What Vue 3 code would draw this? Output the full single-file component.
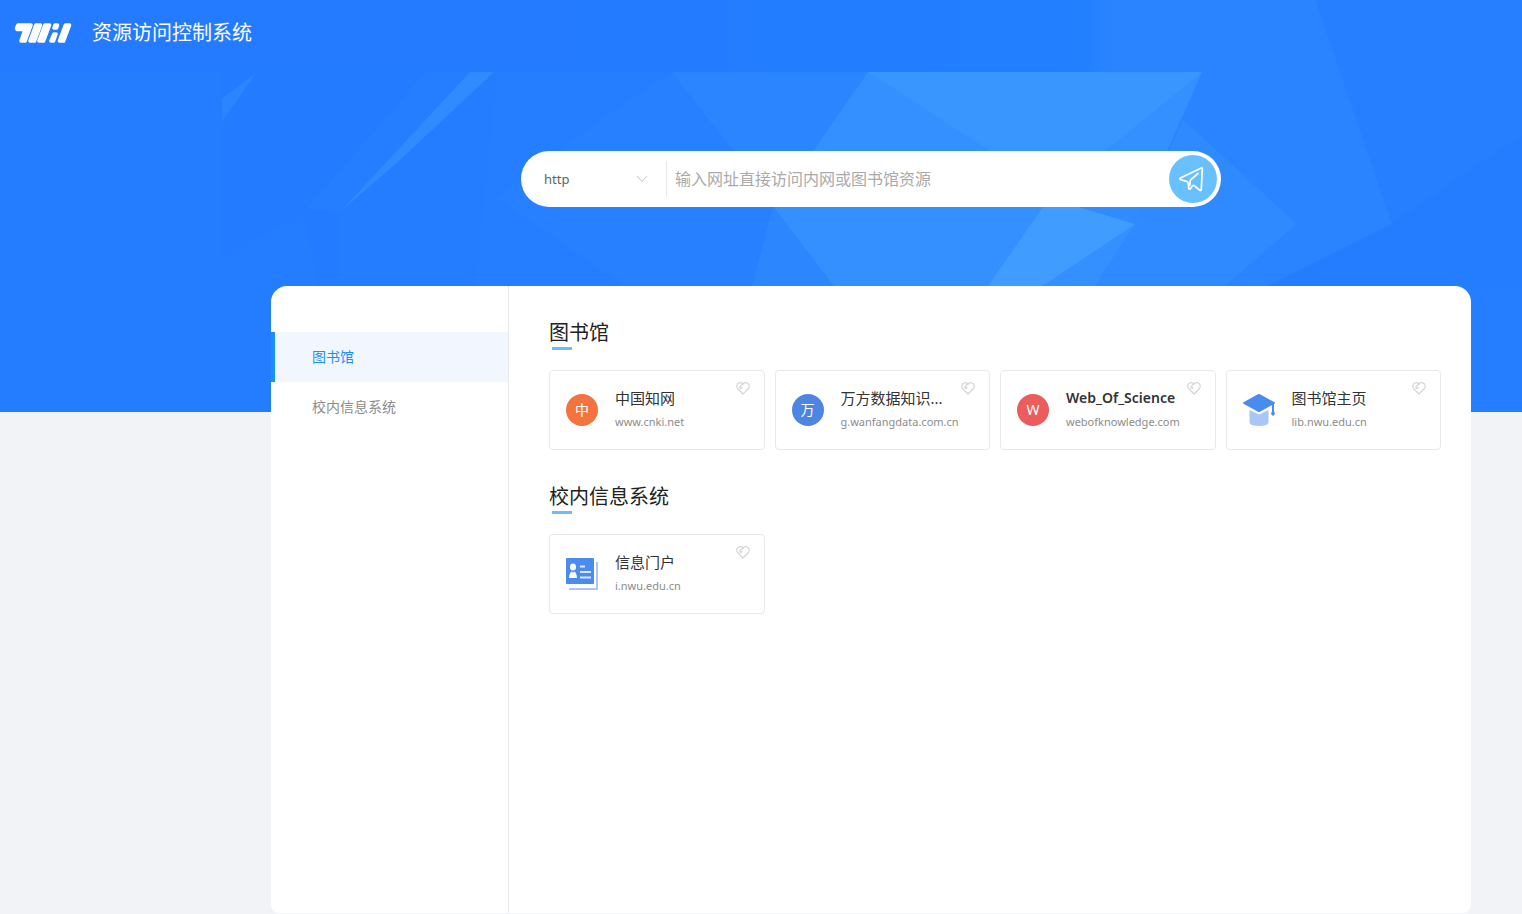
<script setup>
import { ref } from 'vue'

const protocol = ref('http')
const address = ref('')
const activeMenu = ref('library')

const sections = [
  {
    id: 'library',
    title: '图书馆',
    items: [
      { name: '中国知网', host: 'www.cnki.net', mark: '中', tone: 'orange' },
      { name: '万方数据知识...', host: 'g.wanfangdata.com.cn', mark: '万', tone: 'blue' },
      { name: 'Web_Of_Science', host: 'webofknowledge.com', mark: 'W', tone: 'red', latin: true },
      { name: '图书馆主页', host: 'lib.nwu.edu.cn', icon: 'cap' },
    ],
  },
  {
    id: 'campus',
    title: '校内信息系统',
    items: [{ name: '信息门户', host: 'i.nwu.edu.cn', icon: 'portal' }],
  },
]
</script>

<template>
  <div class="page">
    <div class="backdrop">
      <svg viewBox="0 0 1522 412" preserveAspectRatio="xMidYMin slice" aria-hidden="true">
        <defs>
          <linearGradient id="band" x1="0" x2="1" y1="0" y2="0">
            <stop offset="0.5" stop-color="#247bff" />
            <stop offset="1" stop-color="#2280ff" />
          </linearGradient>
          <linearGradient id="facet" gradientUnits="userSpaceOnUse" x1="1085" x2="1110" y1="0" y2="0">
            <stop offset="0" stop-color="#2280ff" />
            <stop offset="1" stop-color="#2a84ff" />
          </linearGradient>
        </defs>
        <polygon points="497,72 1522,72 1522,412 480,412 475,286" fill="#257eff" />
        <polygon points="222,98 257,72 222,122" fill="#2a85ff" />
        <polygon points="425,72 470,72 340,212 305,210" fill="#257eff" />
        <polygon points="222,72 257,72 222,98" fill="#237bff" />
        <polygon points="222,122 257,72 425,72 305,210 222,257" fill="#237bff" />
        <polygon points="305,210 338,214 338,286 318,286" fill="#237bff" />
        <polygon points="470,72 494,72 400,160 340,212" fill="#308bff" />
        <polygon points="498,198 600,120 672,72 900,72 900,286 625,286" fill="#2780ff" />
        <polygon points="672,72 868,72 790,185 760,185" fill="#2b85ff" />
        <polygon points="773,207 834,286 752,286" fill="#2c87ff" />
        <polygon points="1085,0 1316,0 1392,224 1268,286 1095,286 1183,72 1085,72" fill="url(#facet)" />
        <polygon points="1316,0 1522,0 1522,135 1392,224" fill="#267fff" />
        <polygon points="1392,224 1522,135 1522,286 1268,286" fill="#247dff" />
        <polygon points="1183,120 1297,224 1225,286 1095,286 1135,224" fill="#2f8aff" />
        <polygon points="868,72 1202,72 1135,224 1095,286 834,286 765,196 813,151" fill="#3590ff" />
        <polygon points="868,72 1202,72 1105,151 990,151" fill="#3995ff" />
        <polygon points="1078,207 1142,207 1135,224" fill="#308bff" />
        <polygon points="1043,207 1078,207 1135,224 1042,286 988,286" fill="#409cff" />
        <rect x="0" y="0" width="1086" height="72" fill="url(#band)" />
      </svg>
    </div>

    <header class="topbar">
      <svg class="logo" width="58" height="22" viewBox="0 0 58 22" aria-hidden="true">
        <g fill="#fff" stroke="#fff" stroke-width="3.600" stroke-linejoin="round">
          <path d="M4 3H17L11 19H7L11 7.500H3L2.500 6Z" />
          <path d="M22 3H26.500L20.500 19H16Z" />
          <path d="M31 3H35.500L29.500 19H25Z" />
          <path d="M41 3H43.500L42.500 6H40Z" />
          <path d="M40 12H42L39.500 19H37Z" />
          <path d="M51.500 3H55.500L49.500 19H45.500Z" />
        </g>
      </svg>
      <h1>资源访问控制系统</h1>
    </header>

    <main class="content">
      <form class="search" @submit.prevent>
        <div class="protocol">
          <select v-model="protocol" aria-label="协议">
            <option>http</option>
            <option>https</option>
          </select>
          <svg width="12" height="8" viewBox="0 0 12 8" aria-hidden="true">
            <path d="M1 1L6 6.500L11 1" fill="none" stroke="#c0c4cc" />
          </svg>
        </div>
        <input v-model="address" type="text" aria-label="网址" placeholder="输入网址直接访问内网或图书馆资源" />
        <button type="submit" aria-label="访问">
          <svg width="28" height="28" viewBox="0 0 28 28" aria-hidden="true">
            <path
              d="M24.300 3L3.500 13Q2.300 14 3.500 14.600L10 16.500Q11 17 11.200 18.500L11.800 23.500Q12.500 25 13.500 23.500L15.500 20.800Q16.300 20 17.300 20.700L22.800 25.300Q24.200 25.800 24.300 24.500L25.300 4Q25.300 2.800 24.300 3ZM21 8.500L14 14.500Q13 15.500 13 17V20"
              fill="none" stroke="#fff" stroke-width="1.700" stroke-linecap="round" stroke-linejoin="round"
            />
          </svg>
        </button>
      </form>

      <div class="panel">
        <nav class="menu">
          <a
            v-for="section in sections"
            :key="section.id"
            :href="'#' + section.id"
            :class="{ active: activeMenu === section.id }"
            @click="activeMenu = section.id"
          >{{ section.title }}</a>
        </nav>

        <div class="groups">
          <section v-for="section in sections" :id="section.id" :key="section.id">
            <h2>{{ section.title }}</h2>
            <div class="cards">
              <article v-for="item in section.items" :key="item.name" class="card">
                <span v-if="item.mark" class="badge" :class="item.tone">{{ item.mark }}</span>
                <svg v-else-if="item.icon === 'cap'" class="glyph" viewBox="0 0 32 32" aria-hidden="true">
                  <path d="M6.500 16L16 20.500L25.500 16V28.500Q25 32 16 32T6.500 28.500Z" fill="#a9c6f7" />
                  <path d="M15 0.300Q16 -0.200 17 0.300L31.500 8.300Q32.500 9 31.500 9.700L17 17.700Q16 18.200 15 17.700L0.500 9.700Q-0.500 9 0.500 8.300Z" fill="#4a8bee" />
                  <path d="M29 9H31V17L32 20L30 22L28 20L29 17Z" fill="#4a8bee" />
                </svg>
                <svg v-else class="glyph" viewBox="0 0 32 32" aria-hidden="true">
                  <path d="M30 4H32V32H3V30H30Z" fill="#a9c6f7" />
                  <rect width="28" height="26" rx="1" fill="#4a8bee" />
                  <ellipse cx="7" cy="9" rx="3" ry="3.500" fill="#fff" />
                  <path d="M3 20Q3.500 14 6 13.500L7 15L8 13.500Q10.500 14 11 20Z" fill="#fff" />
                  <path d="M14 8.500H19M14 14H25M14 19.500H25" fill="none" stroke="#dbe8fc" stroke-width="2" />
                </svg>
                <div class="info">
                  <h3 :class="{ latin: item.latin }">{{ item.name }}</h3>
                  <p>{{ item.host }}</p>
                </div>
                <button class="favorite" type="button" :aria-label="'收藏 ' + item.name">
                  <svg width="14" height="13" viewBox="0 0 14 13" aria-hidden="true">
                    <g fill="none" stroke="#d4d4d4" stroke-width="1.200" stroke-linecap="round" stroke-linejoin="round">
                      <path d="M7 12L1.500 6.500Q0 4 1.500 2Q3.500 0 6 1L7 2L8 1Q10.500 0 12.500 2Q14 4 12.500 6.500Z" />
                      <path d="M7 2L4 4.500V6L5 6.500L6 5.500" />
                    </g>
                  </svg>
                </button>
              </article>
            </div>
          </section>
        </div>
      </div>
    </main>
  </div>
</template>

<style>
body {
  margin: 0;
  background: #f2f3f7;
}
</style>

<style scoped>
.page {
  position: relative;
  box-sizing: border-box;
  min-height: 100vh;
  padding-bottom: 1px;
  display: flex;
  flex-direction: column;
  color: #303133;
  font-family: "Noto Sans", "Noto Sans CJK SC", sans-serif;
}
.backdrop {
  position: absolute;
  inset: 0 0 auto 0;
  height: 412px;
  overflow: hidden;
  background: #247cff;
}
.backdrop svg {
  display: block;
  width: 100%;
  height: 100%;
}
.topbar {
  position: relative;
  display: flex;
  align-items: center;
  gap: 20px;
  height: 66px;
  padding: 0 14px;
}
h1, h2, h3, p {
  margin: 0;
  font-weight: 400;
}
h1 {
  font-size: 20px;
  line-height: 32px;
  color: #fff;
}
.content {
  position: relative;
  flex: 1;
  display: flex;
  flex-direction: column;
  align-items: center;
  padding: 85px 0 0 220px;
}
.search {
  box-sizing: border-box;
  display: flex;
  align-items: center;
  width: 100%;
  max-width: 700px;
  padding: 4px;
  border-radius: 28px;
  background: #fff;
}
.protocol {
  display: flex;
  align-items: center;
  flex: none;
  width: 141px;
  height: 36px;
  border-right: 1px solid #e4e7ed;
}
.protocol select {
  appearance: none;
  flex: 1;
  min-width: 0;
  height: 36px;
  padding: 0 0 0 19px;
  border: 0;
  background: transparent;
  color: #606266;
  font: 13px "Noto Sans", "Noto Sans CJK SC", sans-serif;
}
.protocol svg {
  flex: none;
  margin-right: 18px;
}
.search input {
  flex: 1;
  min-width: 0;
  height: 40px;
  padding: 0 8px;
  border: 0;
  outline: 0;
  background: transparent;
  color: #606266;
  font: 16px "Noto Sans", "Noto Sans CJK SC", sans-serif;
}
.search input::placeholder {
  color: #aaa;
  opacity: 1;
}
.search button {
  display: flex;
  align-items: center;
  justify-content: center;
  flex: none;
  width: 48px;
  height: 48px;
  padding: 0 4px 0 0;
  border: 0;
  border-radius: 50%;
  background: #69c0ff;
}
.panel {
  flex: 1;
  display: flex;
  width: 100%;
  max-width: 1200px;
  margin-top: 79px;
  overflow: hidden;
  border-radius: 16px 16px 8px 8px;
  background: #fff;
}
.menu {
  box-sizing: border-box;
  flex: none;
  width: 238px;
  padding-top: 46px;
  border-right: 1px solid #e8e8e8;
}
.menu a {
  display: block;
  padding-left: 37px;
  border-left: 4px solid transparent;
  color: #8c8c8c;
  font-size: 14px;
  line-height: 50px;
  text-decoration: none;
}
.menu a.active {
  border-color: #1890ff;
  background: #f2f7ff;
  color: #1890ff;
}
.groups {
  flex: 1;
  min-width: 0;
  padding: 0 30px 30px 40px;
}
section {
  padding-top: 31px;
}
h2 {
  position: relative;
  margin-bottom: 21px;
  color: #222;
  font-size: 20px;
  line-height: 32px;
}
h2::after {
  content: "";
  position: absolute;
  left: 3px;
  bottom: -1px;
  width: 20px;
  height: 3px;
  background: #69bdff;
}
.cards {
  display: grid;
  grid-template-columns: repeat(4, minmax(0, 1fr));
  gap: 10px;
}
.card {
  position: relative;
  box-sizing: border-box;
  display: flex;
  align-items: center;
  gap: 17px;
  height: 80px;
  padding: 0 16px;
  border: 1px solid #e8e8e8;
  border-radius: 4px;
}
.badge {
  flex: none;
  width: 32px;
  border-radius: 50%;
  color: #fff;
  font-size: 14px;
  line-height: 32px;
  text-align: center;
}
.orange { background: #f3743e; }
.blue { background: #4d85e3; }
.red { background: #eb5c5d; }
.glyph {
  flex: none;
  width: 32px;
  height: 32px;
}
.info {
  min-width: 0;
}
h3 {
  color: #333;
  font-size: 15px;
  line-height: 24px;
  white-space: nowrap;
}
h3.latin {
  font-size: 14px;
  font-weight: 600;
}
p {
  color: #8c8c8c;
  font-size: 11px;
  line-height: 24px;
  white-space: nowrap;
}
.favorite {
  position: absolute;
  top: 11px;
  right: 14px;
  display: flex;
  padding: 0;
  border: 0;
  background: transparent;
}
</style>
